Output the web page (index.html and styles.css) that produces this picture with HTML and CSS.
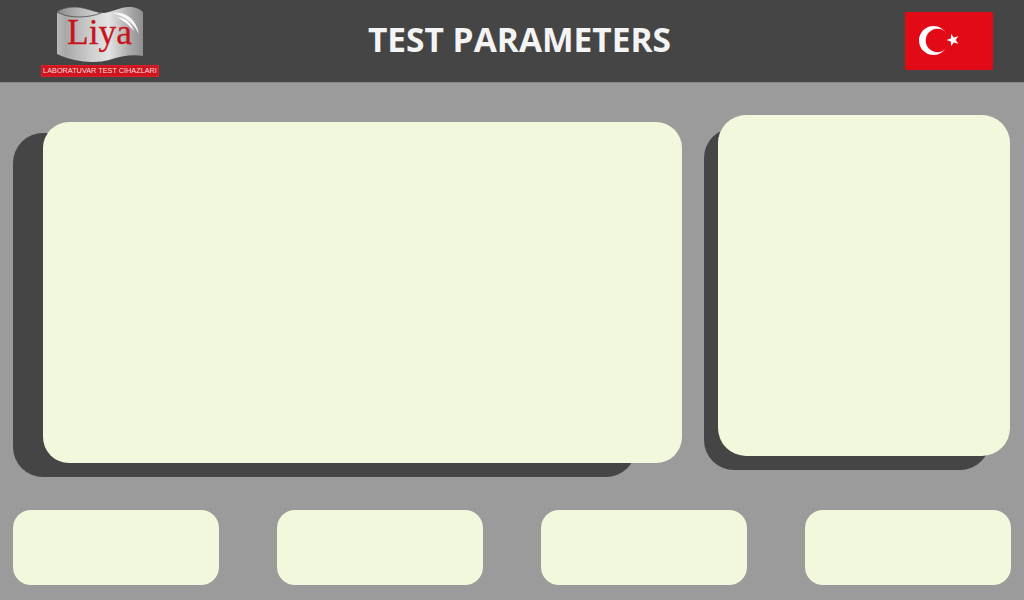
FILE: index.html
```html
<!doctype html>
<html lang="en">
  <head>
    <meta charset="UTF-8" />
    <meta name="viewport" content="width=device-width, initial-scale=1.0" />
    <title>Test Parameters</title>
    <link rel="stylesheet" href="styles.css">
  </head>
  <body>
    <header class="top-bar">
      <div class="logo">
        <svg class="logo-mark" width="118" height="63" viewBox="0 0 118 63">
          <defs>
            <linearGradient id="silver" x1="0" y1="0" x2="1" y2="0">
              <stop offset="0" stop-color="#b9b9b9" />
              <stop offset="0.1" stop-color="#a8a8a8" />
              <stop offset="0.4" stop-color="#cfcfcf" />
              <stop offset="0.6" stop-color="#e4e4e4" />
              <stop offset="0.85" stop-color="#a9a9a9" />
              <stop offset="1" stop-color="#8f8f8f" />
            </linearGradient>
            <linearGradient id="fold" x1="0" y1="0" x2="1" y2="0">
              <stop offset="0" stop-color="#8a8a8a" />
              <stop offset="0.5" stop-color="#b5b5b5" />
              <stop offset="1" stop-color="#d8d8d8" />
            </linearGradient>
          </defs>
          <path d="M16 10 C22 5 34 4 42 6 C50 8 56 11 62 11 C70 11 78 5 88 5 C94 5 99 7 102 10 L102 54 C92 52 80 54 68 58 C54 62 32 60 16 52 Z" fill="url(#silver)" />
          <path d="M16 10 C22 5 34 4 42 6 C50 8 56 10 60 11 C48 16 28 17 16 10 Z" fill="url(#fold)" stroke="#4c4c4c" stroke-width="0.8" />
          <path d="M72 11 C85 9 95 17 98 32 C93 22 85 15 72 11 Z" fill="#f6f6f6" />
          <path d="M76 15 C84 16 90 20 93 29 C88 23 83 19 76 15 Z" fill="#ffffff" />
          <text class="logo-name" x="58.5" y="42" text-anchor="middle">Liya</text>
        </svg>
        <div class="logo-band">LABORATUVAR TEST CİHAZLARI</div>
      </div>
      <h1 class="title">TEST PARAMETERS</h1>
      <div class="flag">
        <svg width="88" height="58" viewBox="0 0 88 58">
          <rect width="88" height="58" fill="#e30a17" />
          <circle cx="28.5" cy="28.5" r="14.5" fill="#ffffff" />
          <circle cx="32.5" cy="28.5" r="11.8" fill="#e30a17" />
          <polygon points="41.5,28 45.9,26.5 46,21.8 48.8,25.5 53.3,24.2 50.6,28 53.3,31.8 48.8,30.5 46,34.2 45.9,29.5" fill="#ffffff" />
        </svg>
      </div>
    </header>

    <main class="content">
      <div class="panels">
        <section class="stack stack-main">
          <div class="backing"></div>
          <div class="card"></div>
        </section>
        <section class="stack stack-side">
          <div class="backing"></div>
          <div class="card"></div>
        </section>
      </div>
      <div class="tiles">
        <div class="tile"></div>
        <div class="tile"></div>
        <div class="tile"></div>
        <div class="tile"></div>
      </div>
    </main>
  </body>
</html>
```

FILE: styles.css
```css
body {
  margin: 0;
  height: 600px;
  overflow: hidden;
  background-color: #9a9b9a;
  font-family: 'Open Sans', sans-serif;
}
.top-bar {
  height: 82px;
  background-color: #454545;
  border-bottom: 1px solid #8a8a8a;
  display: flex;
  align-items: center;
  padding: 0 31px 0 41px;
}
.logo {
  width: 118px;
  align-self: flex-start;
  margin-top: 2px;
  display: flex;
  flex-direction: column;
  flex-shrink: 0;
}
.logo-mark {
  display: block;
}
.logo-name {
  font-family: 'Liberation Serif', serif;
  font-size: 35.5px;
  fill: #c8151d;
  stroke: #c8151d;
  stroke-width: 0.3px;
}
.logo-band {
  height: 12px;
  background-color: #cf141d;
  box-shadow: inset 0 0 2px #f0444c;
  color: #f5dede;
  font-family: 'Liberation Sans', sans-serif;
  font-size: 7.3px;
  line-height: 12px;
  text-align: center;
  white-space: nowrap;
}
.title {
  flex: 1;
  margin: 0 25px 4px 0;
  color: #f4f4f4;
  font-size: 33.5px;
  font-weight: 700;
  text-align: center;
}
.flag {
  height: 58px;
  margin-top: -1px;
}
.flag svg {
  display: block;
}
.content {
  padding: 32px 13px 0;
}
.panels {
  display: flex;
  align-items: flex-start;
  justify-content: space-between;
}
.stack {
  display: grid;
}
.stack > div {
  grid-area: 1 / 1;
}
.card {
  background-color: #f2f8dc;
  border-radius: 26px;
}
.backing {
  background-color: #454545;
  border-radius: 30px;
}
.stack-main {
  width: 669px;
  height: 355px;
  margin-top: 7px;
}
.stack-main .card {
  margin: 0 0 14px 30px;
}
.stack-main .backing {
  margin: 11px 46px 0 0;
}
.stack-side {
  width: 306px;
  height: 355px;
  margin-right: 1px;
  margin-left: 22px;
}
.stack-side .card {
  margin: 0 0 14px 14px;
  border-radius: 28px;
}
.stack-side .backing {
  margin: 13px 20px 0 0;
}
.tiles {
  display: grid;
  grid-template-columns: repeat(4, 206px);
  justify-content: space-between;
  margin-top: 33px;
}
.tile {
  height: 75px;
  background-color: #f2f8dc;
  border-radius: 18px;
}
```
